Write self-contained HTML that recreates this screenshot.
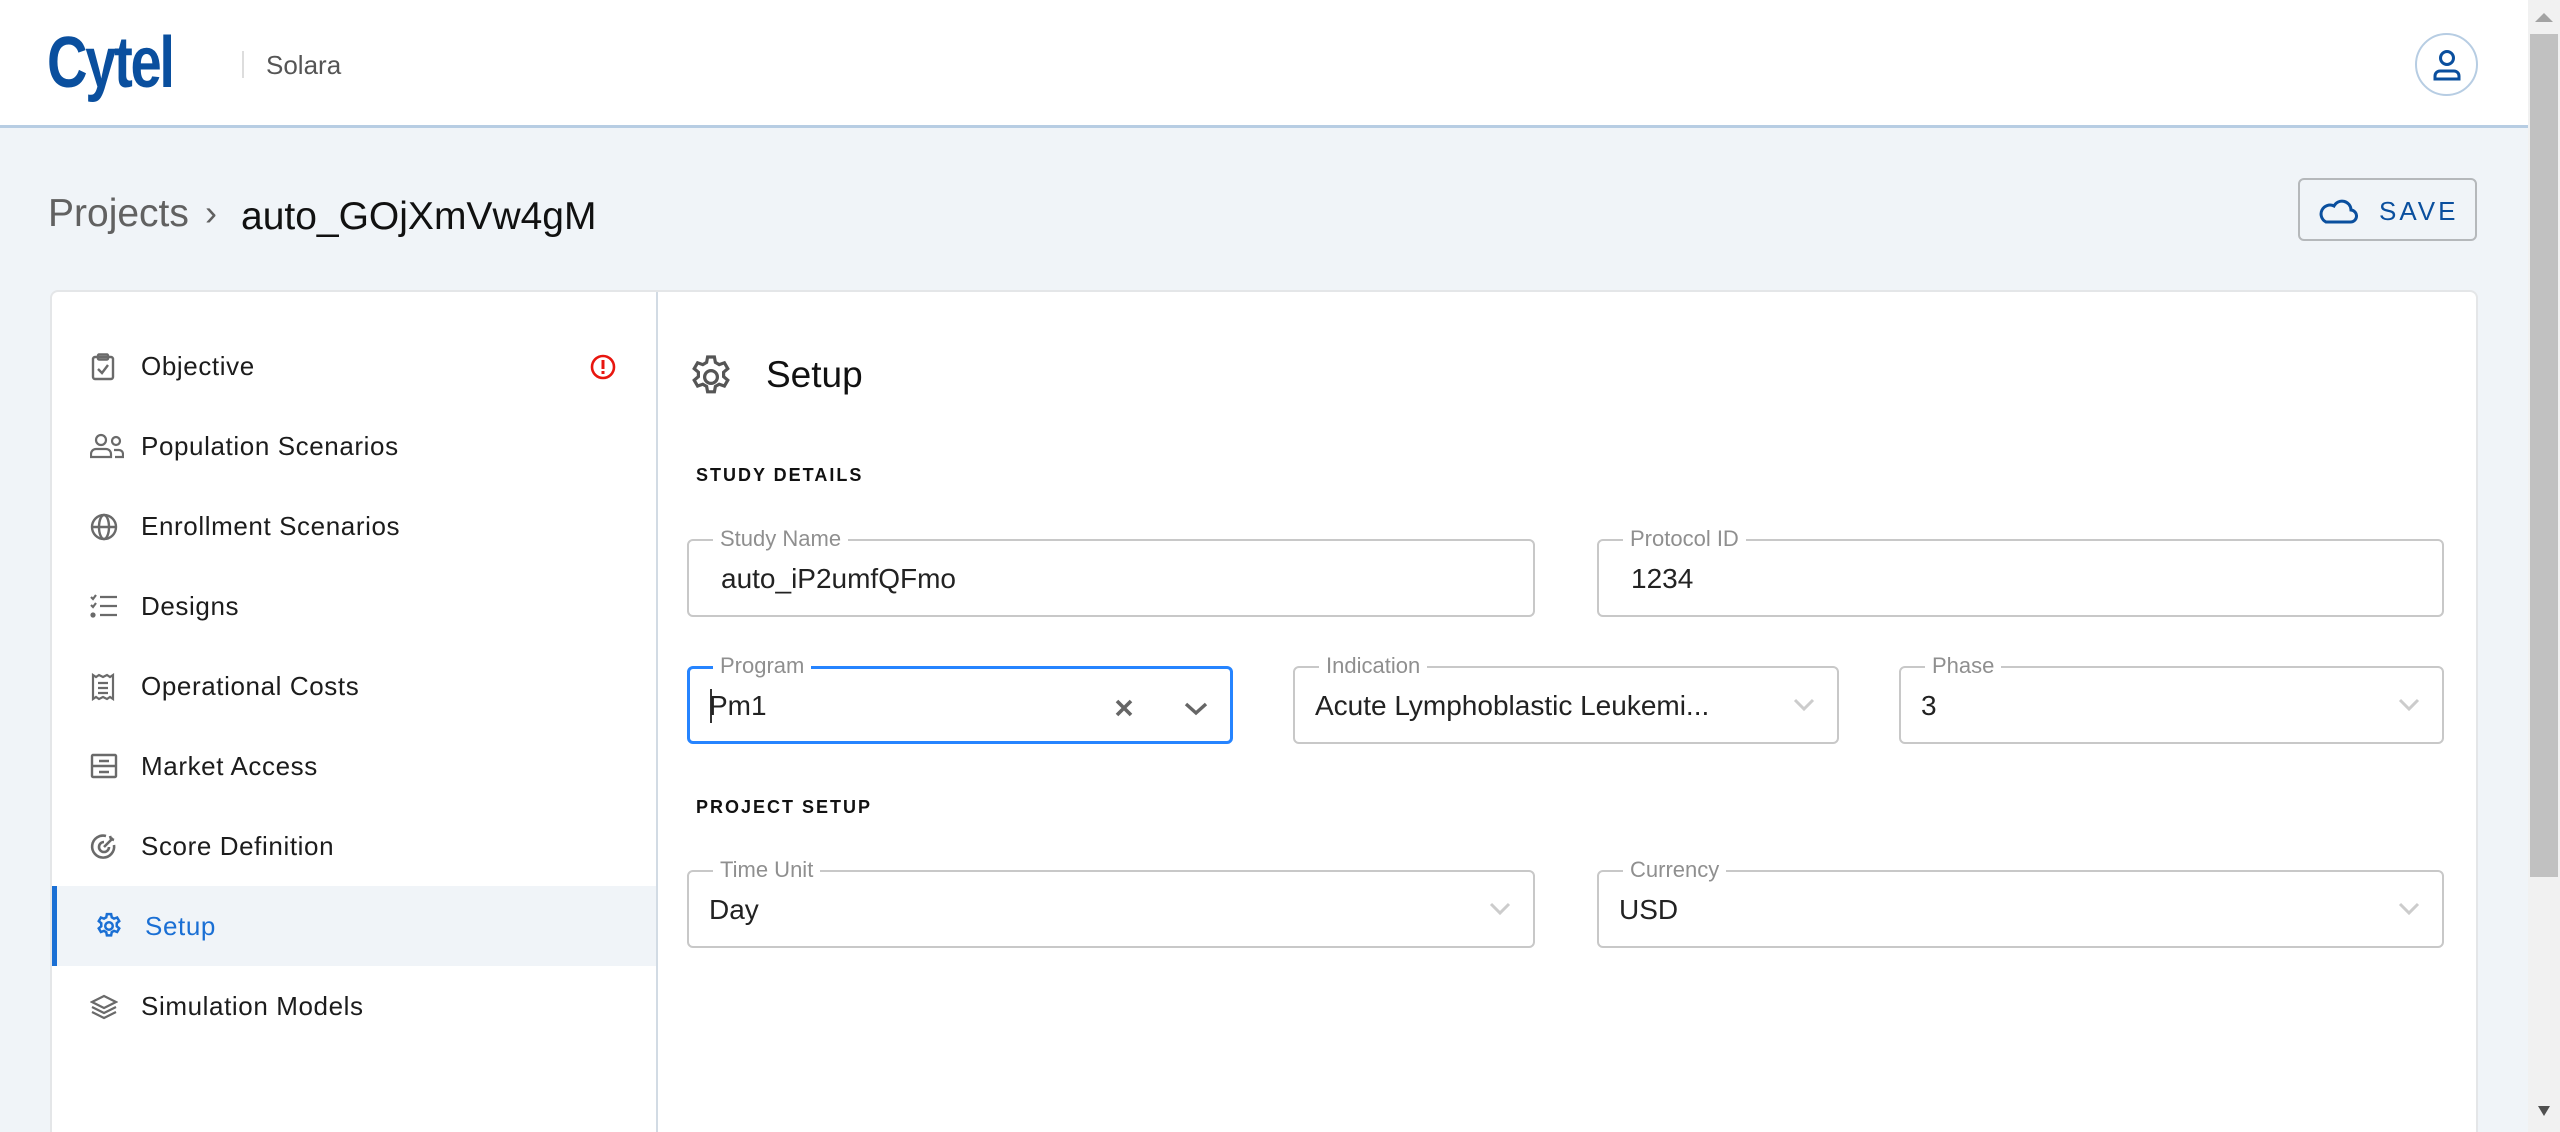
<!DOCTYPE html>
<html><head><meta charset="utf-8"><style>
*{box-sizing:border-box;margin:0;padding:0}
html{width:2560px;height:1132px;overflow:hidden}
body{width:2560px;height:1132px;overflow:hidden;background:#f0f4f8;font-family:"Liberation Sans",sans-serif;position:relative;color:#222}
.abs{position:absolute}
.hdr{left:0;top:0;width:2528px;height:128px;background:#fff;border-bottom:3px solid #b7cde3}
.sb{left:2528px;top:0;width:32px;height:1132px;background:#f1f1f1}
.card{left:50px;top:290px;width:2428px;height:842px;background:#fff;border:2px solid #e4e6e8;border-bottom:none;border-radius:8px 8px 0 0}
.side{left:0;top:0;width:606px;height:842px;border-right:2px solid #d2dbe4}
.nav{position:absolute;left:0;width:604px;height:80px;display:flex;align-items:center;font-size:26px;letter-spacing:.6px;color:#1c1c1c}
.nav svg{position:absolute;left:38px;top:27px}
.nav span{position:absolute;left:89px}
.fld{position:absolute;border:2px solid #c8c8c8;border-radius:6px;height:78px}
.fld label{position:absolute;left:24px;top:-15px;background:#fff;padding:0 7px;font-size:22px;color:#8f8f8f}
.fld .v{position:absolute;left:20px;top:22px;font-size:28px;color:#222}
.fld .ch{position:absolute;right:22px;top:30px}
.sec{position:absolute;font-size:18px;font-weight:bold;letter-spacing:2px;color:#111}
</style></head><body>
<div class="abs hdr"></div>
<div class="abs" style="left:47px;top:22px;font:bold 72px 'Liberation Sans',sans-serif;color:#0a4f9e;letter-spacing:-3px;transform:scaleX(.78);transform-origin:left">Cytel</div>
<div class="abs" style="left:242px;top:51px;width:2px;height:27px;background:#ddd"></div>
<div class="abs" style="left:266px;top:50px;font-size:26px;color:#555">Solara</div>
<div class="abs" style="left:2415px;top:33px;width:63px;height:63px;border:2px solid #b7cde3;border-radius:50%"></div>
<svg class="abs" style="left:2430px;top:48px" width="34" height="34" viewBox="0 0 34 34" fill="none" stroke="#0a4f9e" stroke-width="3"><circle cx="17" cy="10" r="6.5"/><path d="M5 31v-3a5 5 0 0 1 5-5h14a5 5 0 0 1 5 5v3z"/></svg>
<div class="abs sb"></div>
<div class="abs" style="left:2530px;top:34px;width:28px;height:843px;background:#c1c1c1"></div>
<svg class="abs" style="left:2535px;top:12px" width="18" height="12"><path d="M0 10L9 1 18 10z" fill="#a3a3a3"/></svg>
<svg class="abs" style="left:2538px;top:1106px" width="12" height="10"><path d="M0 0h12L6 10z" fill="#505050"/></svg>

<div class="abs" style="left:48px;top:192px;font-size:39px;color:#616161">Projects</div>
<div class="abs" style="left:205px;top:192px;font-size:36px;color:#616161">›</div>
<div class="abs" style="left:241px;top:195px;font-size:39px;color:#111">auto_GOjXmVw4gM</div>

<div class="abs" style="left:2298px;top:178px;width:179px;height:63px;border:2px solid #b5b8bb;border-radius:6px"></div>
<svg class="abs" style="left:2316px;top:195px" width="42" height="30" viewBox="0 0 42 30" fill="none" stroke="#0a4f9e" stroke-width="3"><path d="M10 27h24a6 6 0 0 0 1-12 9 9 0 0 0-17-4 7 7 0 0 0-8 16z"/></svg>
<div class="abs" style="left:2379px;top:196px;font-size:26px;letter-spacing:3px;color:#0a4f9e">SAVE</div>

<div class="abs card">
 <div class="abs side">
  <div class="nav" style="top:34px"><svg width="26" height="28" viewBox="0 0 26 28" fill="none" stroke="#6a6a6a" stroke-width="2.4"><rect x="3" y="4" width="20" height="22" rx="2"/><rect x="8" y="1.5" width="10" height="5" rx="1"/><path d="M8 16l4 4 6-8"/></svg><span>Objective</span>
   <svg style="left:538px;top:28px" width="26" height="26" viewBox="0 0 26 26"><circle cx="13" cy="13" r="11" fill="none" stroke="#e8160f" stroke-width="2.6"/><rect x="11.5" y="6" width="3" height="9" fill="#e8160f"/><rect x="11.5" y="17" width="3" height="3" fill="#e8160f"/></svg></div>
  <div class="nav" style="top:114px"><svg width="34" height="26" viewBox="0 0 34 26" fill="none" stroke="#6a6a6a" stroke-width="2.2"><circle cx="11" cy="7" r="5"/><path d="M1 24v-3a5 5 0 0 1 5-5h10a5 5 0 0 1 5 5v3z"/><circle cx="26" cy="8" r="4"/><path d="M24 17h5a4 4 0 0 1 4 4v3h-8"/></svg><span>Population Scenarios</span></div>
  <div class="nav" style="top:194px"><svg width="28" height="28" viewBox="0 0 28 28" fill="none" stroke="#6a6a6a" stroke-width="2.4"><circle cx="14" cy="14" r="12"/><ellipse cx="14" cy="14" rx="5" ry="12"/><path d="M2 14h24"/></svg><span>Enrollment Scenarios</span></div>
  <div class="nav" style="top:274px"><svg width="28" height="26" viewBox="0 0 28 26" fill="none" stroke="#6a6a6a" stroke-width="2.2"><path d="M1 4l2 2 3-4M1 12l2 2 3-4M10 4h17M10 13h17M10 22h17"/><circle cx="3" cy="22" r="1.5" fill="#6a6a6a"/></svg><span>Designs</span></div>
  <div class="nav" style="top:354px"><svg width="26" height="28" viewBox="0 0 26 28" fill="none" stroke="#6a6a6a" stroke-width="2.2"><path d="M3 2l3 2 3-2 4 2 4-2 3 2 3-2v24l-3-2-3 2-4-2-4 2-3-2-3 2z"/><path d="M8 10h10M8 15h10M8 20h10"/></svg><span>Operational Costs</span></div>
  <div class="nav" style="top:434px"><svg width="28" height="26" viewBox="0 0 28 26" fill="none" stroke="#6a6a6a" stroke-width="2.4"><rect x="2" y="2" width="24" height="22" rx="1"/><path d="M2 13h24M9 8h10M9 19h10"/></svg><span>Market Access</span></div>
  <div class="nav" style="top:514px"><svg width="28" height="28" viewBox="0 0 28 28" fill="none" stroke="#6a6a6a" stroke-width="2.6"><path d="M24 12a11 11 0 1 1-8-9"/><path d="M19 14a5 5 0 1 1-5-5"/><path d="M14 14l9-9M20 3l1 3 3 1" /></svg><span>Score Definition</span></div>
  <div class="nav" style="top:594px;background:#f0f4f8;color:#1a6fd4"><div class="abs" style="left:0;top:0;width:5px;height:80px;background:#1a6fd4"></div><svg style="left:42px;top:25px" width="30" height="30" viewBox="0 0 24 24" fill="none" stroke="#1a6fd4" stroke-width="2"><circle cx="12" cy="12" r="3"/><path d="M10.3 2.5h3.4l.5 2.6 1.8 1 2.5-.9 1.7 2.9-2 1.7v2.4l2 1.7-1.7 2.9-2.5-.9-1.8 1-.5 2.6h-3.4l-.5-2.6-1.8-1-2.5.9-1.7-2.9 2-1.7v-2.4l-2-1.7 1.7-2.9 2.5.9 1.8-1z"/></svg><span style="left:93px">Setup</span></div>
  <div class="nav" style="top:674px"><svg width="28" height="28" viewBox="0 0 28 28" fill="none" stroke="#6a6a6a" stroke-width="2.2"><path d="M14 3L2 9l12 6 12-6z"/><path d="M2 14l12 6 12-6M2 19l12 6 12-6"/></svg><span>Simulation Models</span></div>
 </div>
 <svg class="abs" style="left:635px;top:61px" width="48" height="48" viewBox="0 0 24 24" fill="none" stroke="#555" stroke-width="1.6"><circle cx="12" cy="12" r="3.2"/><path d="M10.3 2h3.4l.5 2.7 1.9 1.1 2.6-.9 1.7 2.9-2.1 1.8v2.2l2.1 1.8-1.7 2.9-2.6-.9-1.9 1.1-.5 2.7h-3.4l-.5-2.7-1.9-1.1-2.6.9-1.7-2.9 2.1-1.8v-2.2L3.6 7.8l1.7-2.9 2.6.9 1.9-1.1z"/></svg>
 <div class="abs" style="left:714px;top:62px;font-size:37px;color:#111">Setup</div>
</div>

<div class="sec" style="left:696px;top:465px">STUDY DETAILS</div>
<div class="fld" style="left:687px;top:539px;width:848px"><label>Study Name</label><div class="v" style="left:32px">auto_iP2umfQFmo</div></div>
<div class="fld" style="left:1597px;top:539px;width:847px"><label>Protocol ID</label><div class="v" style="left:32px">1234</div></div>

<div class="fld" style="left:687px;top:666px;width:546px;border:3px solid #2684ff"><label style="top:-16px;left:23px">Program</label><div class="abs" style="left:20px;top:20px;width:2px;height:34px;background:#333"></div><div class="v" style="left:19px;top:21px">Pm1</div>
 <svg class="abs" style="left:424px;top:29px" width="20" height="20"><path d="M3 3l14 14M17 3L3 17" stroke="#666" stroke-width="3.6"/></svg>
 <svg class="abs" style="left:494px;top:33px" width="24" height="14"><path d="M2 2l10 9 10-9" fill="none" stroke="#666" stroke-width="3.4"/></svg></div>
<div class="fld" style="left:1293px;top:666px;width:546px"><label>Indication</label><div class="v">Acute Lymphoblastic Leukemi...</div><svg class="ch" width="22" height="14"><path d="M2 2l9 9 9-9" fill="none" stroke="#ccc" stroke-width="3"/></svg></div>
<div class="fld" style="left:1899px;top:666px;width:545px"><label>Phase</label><div class="v">3</div><svg class="ch" width="22" height="14"><path d="M2 2l9 9 9-9" fill="none" stroke="#ccc" stroke-width="3"/></svg></div>

<div class="sec" style="left:696px;top:797px">PROJECT SETUP</div>
<div class="fld" style="left:687px;top:870px;width:848px"><label>Time Unit</label><div class="v">Day</div><svg class="ch" width="22" height="14"><path d="M2 2l9 9 9-9" fill="none" stroke="#ccc" stroke-width="3"/></svg></div>
<div class="fld" style="left:1597px;top:870px;width:847px"><label>Currency</label><div class="v">USD</div><svg class="ch" width="22" height="14"><path d="M2 2l9 9 9-9" fill="none" stroke="#ccc" stroke-width="3"/></svg></div>
</body></html>
